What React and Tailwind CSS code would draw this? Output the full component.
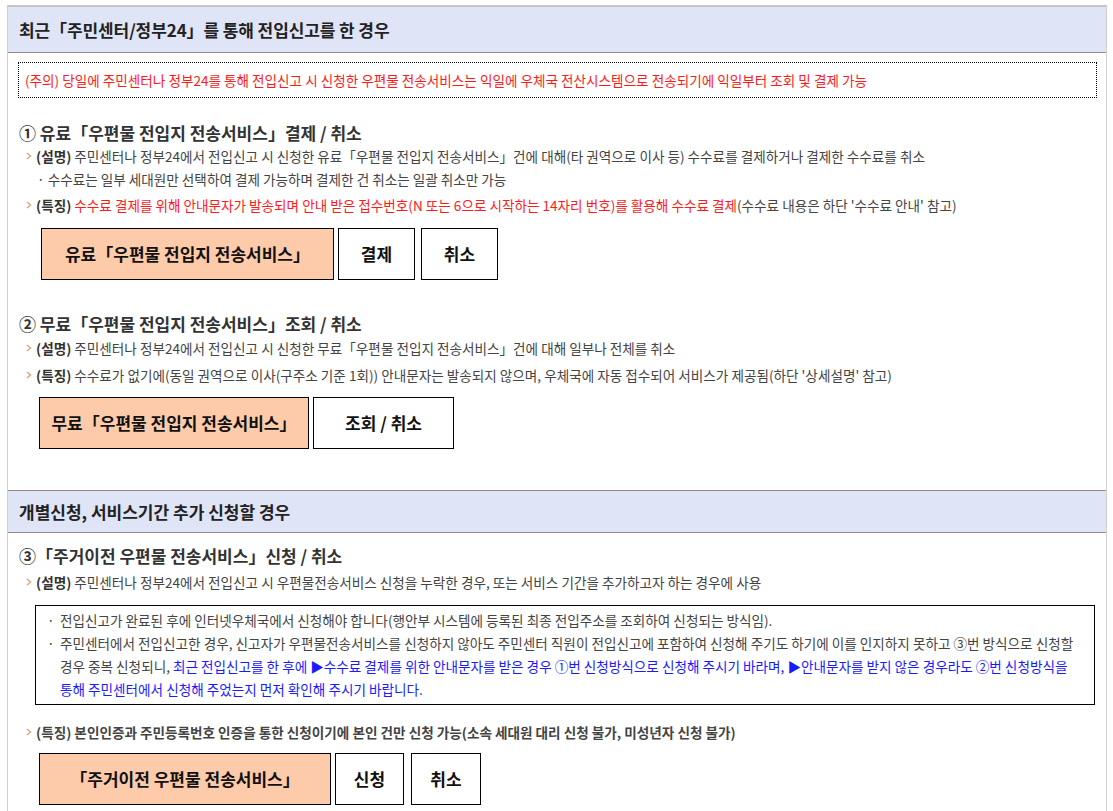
import React from "react";

const Arrow = () => (
  <svg width="6" height="8" viewBox="0 0 6 8" className="mr-[4px] shrink-0">
    <path d="M1 1 L4.5 4 L1 7" fill="none" stroke="#d8a878" strokeWidth="1.4" />
  </svg>
);

const Row = ({ children, className = "" }) => (
  <div className={"flex items-center pl-[18px] text-[13.6px] leading-[20px] text-[#444] " + className}>
    <Arrow />
    <div className="whitespace-nowrap">{children}</div>
  </div>
);

const Btn = ({ children, w, peach }) => (
  <div
    className={
      "flex h-[52px] items-center justify-center border border-black text-[17px] font-bold text-[#111] " +
      (peach ? "bg-[#fecbaa] " : "bg-white ") +
      w
    }
  >
    {children}
  </div>
);

const Title = ({ children, className = "" }) => (
  <div className={"pl-[11px] text-[17px] font-bold leading-[24px] text-[#333] " + className}>{children}</div>
);

export default function App() {
  return (
    <div
      className="min-h-[811px] bg-white pl-[7px] pt-[5px]"
      style={{ fontFamily: '"Noto Sans CJK KR", "Noto Sans", sans-serif' }}
    >
      <div className="w-[1100px] border-x border-[#cfcfcf]">
        {/* section 1 */}
        <div className="flex h-[48px] items-center border-t-2 border-b border-t-[#c4c4c4] border-b-[#8c8c8c] bg-[#dfe4f6] pl-[11px] text-[17px] font-bold tracking-[-0.1px] text-[#222]">
          최근「주민센터/정부24」를 통해 전입신고를 한 경우
        </div>
        <div className="ml-[10px] mr-[9px] mt-[9px] flex h-[36px] items-center border border-dotted border-black pl-[6px] text-[13.6px] text-[#ff1a1a]">
          (주의) 당일에 주민센터나 정부24를 통해 전입신고 시 신청한 우편물 전송서비스는 익일에 우체국 전산시스템으로 전송되기에 익일부터 조회 및 결제 가능
        </div>

        <Title className="mt-[23px]">① 유료「우편물 전입지 전송서비스」결제 / 취소</Title>
        <Row className="mt-[1px]">
          <b className="text-[#333]">(설명)</b> 주민센터나 정부24에서 전입신고 시 신청한 유료「우편물 전입지 전송서비스」건에 대해(타 권역으로 이사 등) 수수료를 결제하거나 결제한 수수료를 취소
        </Row>
        <div className="mt-[3px] pl-[29px] text-[13.6px] leading-[20px] text-[#444]">
          · 수수료는 일부 세대원만 선택하여 결제 가능하며 결제한 건 취소는 일괄 취소만 가능
        </div>
        <Row className="mt-[6px]">
          <b className="text-[#333]">(특징)</b>{" "}
          <span className="text-[#ff1a1a]">
            수수료 결제를 위해 안내문자가 발송되며 안내 받은 접수번호(N 또는 6으로 시작하는 14자리 번호)를 활용해 수수료 결제
          </span>
          (수수료 내용은 하단 '수수료 안내' 참고)
        </Row>
        <div className="mt-[13px] flex gap-[4px] pl-[33px]">
          <Btn w="w-[293px]" peach>유료「우편물 전입지 전송서비스」</Btn>
          <Btn w="w-[77px]">결제</Btn>
          <Btn w="w-[77px] ml-[2px]">취소</Btn>
        </div>

        <Title className="mt-[32px]">② 무료「우편물 전입지 전송서비스」조회 / 취소</Title>
        <Row className="mt-[2px]">
          <b className="text-[#333]">(설명)</b> 주민센터나 정부24에서 전입신고 시 신청한 무료「우편물 전입지 전송서비스」건에 대해 일부나 전체를 취소
        </Row>
        <Row className="mt-[7px]">
          <b className="text-[#333]">(특징)</b> 수수료가 없기에(동일 권역으로 이사(구주소 기준 1회)) 안내문자는 발송되지 않으며, 우체국에 자동 접수되어 서비스가 제공됨(하단 '상세설명' 참고)
        </Row>
        <div className="mt-[12px] flex gap-[4px] pl-[31px]">
          <Btn w="w-[270px]" peach>무료「우편물 전입지 전송서비스」</Btn>
          <Btn w="w-[141px]">조회 / 취소</Btn>
        </div>
        <div className="h-[41px]" />

        {/* section 2 */}
        <div className="flex h-[43px] items-center border-y border-[#8c8c8c] bg-[#dfe4f6] pl-[11px] text-[17px] font-bold text-[#222]">
          개별신청, 서비스기간 추가 신청할 경우
        </div>
        <Title className="mt-[11px]">③「주거이전 우편물 전송서비스」신청 / 취소</Title>
        <Row className="mt-[4px]">
          <b className="text-[#333]">(설명)</b> 주민센터나 정부24에서 전입신고 시 우편물전송서비스 신청을 누락한 경우, 또는 서비스 기간을 추가하고자 하는 경우에 사용
        </Row>
        <div className="ml-[27px] mr-[11px] mt-[13px] border border-black py-[3px] pl-[11px] pr-[2px] text-[13.6px] leading-[23px] text-[#444]">
          <div className="flex">
            <span className="w-[13px] shrink-0">·</span>
            <span className="whitespace-nowrap">전입신고가 완료된 후에 인터넷우체국에서 신청해야 합니다(행안부 시스템에 등록된 최종 전입주소를 조회하여 신청되는 방식임).</span>
          </div>
          <div className="flex">
            <span className="w-[13px] shrink-0">·</span>
            <span className="whitespace-nowrap">
              주민센터에서 전입신고한 경우, 신고자가 우편물전송서비스를 신청하지 않아도 주민센터 직원이 전입신고에 포함하여 신청해 주기도 하기에 이를 인지하지 못하고 ③번 방식으로 신청할
              <br />
              경우 중복 신청되니,{" "}
              <span className="text-[#1a1aff]">
                최근 전입신고를 한 후에 ▶수수료 결제를 위한 안내문자를 받은 경우 ①번 신청방식으로 신청해 주시기 바라며, ▶안내문자를 받지 않은 경우라도 ②번 신청방식을
                <br />
                통해 주민센터에서 신청해 주었는지 먼저 확인해 주시기 바랍니다.
              </span>
            </span>
          </div>
        </div>
        <Row className="mt-[17px] font-bold text-[#333]">
          (특징) 본인인증과 주민등록번호 인증을 통한 신청이기에 본인 건만 신청 가능(소속 세대원 대리 신청 불가, 미성년자 신청 불가)
        </Row>
        <div className="mt-[11px] flex gap-[4px] pb-[10px] pl-[31px]">
          <Btn w="w-[292px]" peach>「주거이전 우편물 전송서비스」</Btn>
          <Btn w="w-[69px]">신청</Btn>
          <Btn w="w-[70px] ml-[3px]">취소</Btn>
        </div>
      </div>
    </div>
  );
}
